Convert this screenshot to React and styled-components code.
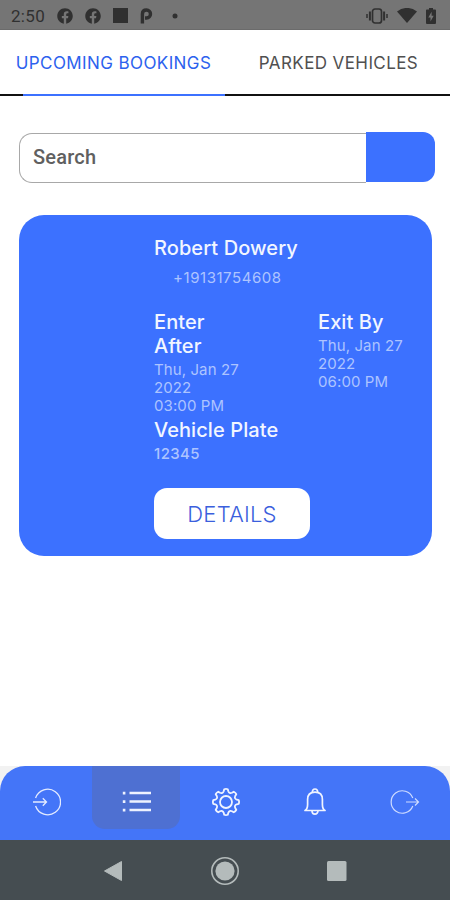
import styled, { createGlobalStyle } from "styled-components";
import { FaFacebook } from "react-icons/fa";

const BLUE = "#3c71ff";

const navItems = [
  { id: "enter", icon: <EnterIcon /> },
  { id: "list", icon: <ListIcon />, active: true },
  { id: "settings", icon: <GearIcon /> },
  { id: "alerts", icon: <BellIcon /> },
  { id: "exit", icon: <ExitIcon /> },
];

export default function App() {
  return (
    <Screen>
      <GlobalStyle />
      <StatusBar />

      <Tabs>
        <Tab $active>UPCOMING BOOKINGS</Tab>
        <Tab>PARKED VEHICLES</Tab>
      </Tabs>
      <TabTrack>
        <TabIndicator />
      </TabTrack>

      <Content>
        <SearchBar>
          <SearchInput placeholder="Search" aria-label="Search" />
          <SearchButton aria-label="Submit search" />
        </SearchBar>
        <BookingCard />
      </Content>

      <BottomArea>
        <BottomNav>
          {navItems.map(({ id, icon, active }) => (
            <NavItem key={id} $active={active} aria-label={id}>
              {icon}
            </NavItem>
          ))}
        </BottomNav>
      </BottomArea>

      <SystemBar>
        <svg width="20" height="22" viewBox="0 0 20 22">
          <path d="M18.5 1.500v19L1.500 11z" fill="#b4bbbb" stroke="#b4bbbb" strokeLinejoin="round" />
        </svg>
        <svg width="30" height="30" viewBox="0 0 30 30">
          <circle cx="15" cy="15" r="13.200" fill="none" stroke="#b4bbbb" strokeWidth="1.6" />
          <circle cx="15" cy="15" r="9.6" fill="#b4bbbb" />
        </svg>
        <svg width="20" height="20" viewBox="0 0 20 20">
          <rect width="19.5" height="20" rx="1.5" fill="#b4bbbb" />
        </svg>
      </SystemBar>
    </Screen>
  );
}

function StatusBar() {
  return (
    <StatusWrapper>
      <Clock>2:50</Clock>
      <StatusIcons>
        <FaFacebook size={16} />
        <FaFacebook size={16} />
        <svg width="15" height="15" viewBox="0 0 15 15">
          <rect width="15" height="15" fill="currentColor" />
        </svg>
        <svg width="13" height="16" viewBox="0 0 13 16">
          <path
            d="M2.4 15.500V6Q2.400 2 6.500 2A3.900 3.900 0 0 1 6.500 10H5"
            fill="none"
            stroke="currentColor"
            strokeWidth="3.4"
          />
        </svg>
        <svg width="6" height="6" viewBox="0 0 6 6">
          <circle cx="3" cy="3" r="2.5" fill="currentColor" />
        </svg>
      </StatusIcons>
      <SystemIcons>
        <svg width="22" height="16" viewBox="0 0 22 16" fill="none" stroke="currentColor">
          <rect x="6.5" y="1" width="9" height="14" rx="2.5" strokeWidth="1.7" />
          <path d="M3.9 3.5v9M18.1 3.5v9" strokeWidth="2" />
          <path d="M1 6v4M21 6v4" strokeWidth="1.5" />
        </svg>
        <svg width="20" height="15" viewBox="0 0 20 15">
          <path d="M0 3.4Q10-3.6 20 3.4L10 15z" fill="currentColor" />
        </svg>
        <svg width="10" height="16" viewBox="0 0 10 16">
          <path d="M3 0h4v1.6h2.2q.8 0 .8.8V15q0 1-1 1H1q-1 0-1-1V2.4q0-.8.8-.8H3z" fill="currentColor" />
          <path d="M5.6 3.8L2.3 9.4h2.2v4l3.2-5.7H5.6z" fill="#757575" />
        </svg>
      </SystemIcons>
    </StatusWrapper>
  );
}

function BookingCard() {
  return (
    <Card>
      <Heading>Robert Dowery</Heading>
      <Phone>+19131754608</Phone>
      <Times>
        <TimeBlock>
          <Heading>Enter After</Heading>
          <Detail>Thu, Jan 27 2022<br />03:00 PM</Detail>
        </TimeBlock>
        <TimeBlock>
          <Heading>Exit By</Heading>
          <Detail>Thu, Jan 27 2022<br />06:00 PM</Detail>
        </TimeBlock>
      </Times>
      <Heading>Vehicle Plate</Heading>
      <Plate>12345</Plate>
      <DetailsButton>DETAILS</DetailsButton>
    </Card>
  );
}

function EnterIcon() {
  return (
    <svg width="28" height="28" viewBox="0 0 28 28" fill="none" stroke="#e4ebff" strokeWidth="1.3">
      <path d="M2.6 10A12.8 12.8 0 1 1 2.6 18" />
      <path d="M0 14h13.5M9.8 10.3l3.7 3.7-3.7 3.7" />
    </svg>
  );
}

function ListIcon() {
  return (
    <svg width="29" height="22" viewBox="0 0 29 22" fill="#eef2ff">
      <path d="M7.5 .8h21.500v2.400H7.500zM7.500 9.300h21.500v2.400H7.500zM7.500 17.800h21.500v2.400H7.500z" />
      <path d="M.8 .8h2.600v2.600H.8zM.8 9.300h2.600v2.600H.8zM.8 17.800h2.600v2.600H.8z" />
    </svg>
  );
}

function GearIcon() {
  // one rounded tooth per 45deg, joined by concave notches
  const point = (radius, degrees) => {
    const angle = (degrees * Math.PI) / 180;
    return `${14 + radius * Math.cos(angle)} ${14 + radius * Math.sin(angle)}`;
  };
  const teeth = Array.from({ length: 8 }, (_, i) => {
    const mid = i * 45 - 90;
    return `${i ? "L" : "M"}${point(12.9, mid - 8)}Q${point(13.4, mid)} ${point(12.9, mid + 8)}L${point(11, mid + 12)}Q${point(8.8, mid + 22.5)} ${point(11, mid + 33)}`;
  }).join("");

  return (
    <svg width="28" height="28" viewBox="0 0 28 28" fill="none" stroke="#f0f4ff" strokeWidth="1.8">
      <path d={`${teeth}Z`} strokeLinejoin="round" />
      <circle cx="14" cy="14" r="6" />
    </svg>
  );
}

function BellIcon() {
  return (
    <svg width="22" height="28" viewBox="0 0 22 28" fill="none" stroke="#f0f4ff" strokeWidth="1.7">
      <path d="M1 22.5q2.600-1.400 2.600-6V11.500q0-7.300 7.400-7.300t7.400 7.300v5q0 4.600 2.600 6z" strokeLinejoin="round" />
      <path d="M8.5 4.300a2.600 2.600 0 1 1 5 0M8 22.700a3 3.400 0 0 0 6 0" />
    </svg>
  );
}

function ExitIcon() {
  return (
    <svg width="30" height="24" viewBox="0 0 30 24" fill="none" stroke="#cfdcff" strokeWidth="1.2">
      <path d="M22.8 8A11.200 11.200 0 1 0 22.800 16" />
      <path d="M16 12h12.500M25 8.500l3.500 3.500-3.500 3.500" />
    </svg>
  );
}

const GlobalStyle = createGlobalStyle`
  * {
    box-sizing: border-box;
  }

  body {
    margin: 0;
    background: #fff;
  }

  button, input {
    border: 0;
    padding: 0;
    background: none;
    font-family: inherit;
  }

  svg {
    display: block;
    flex: none;
  }
`;

const Screen = styled.div`
  display: flex;
  flex-direction: column;
  width: 450px;
  height: 900px;
  overflow: hidden;
  background: #fff;
  font-family: Inter, "Liberation Sans", sans-serif;
`;

const StatusWrapper = styled.header`
  display: flex;
  align-items: center;
  height: 30px;
  padding: 2px 14px 0 11px;
  background: #757575;
  border-bottom: 1px solid #6b6b6b;
  color: #303030;
`;

const Clock = styled.span`
  width: 46px;
  font: 400 17px Roboto, sans-serif;
  letter-spacing: .3px;
`;

const StatusIcons = styled.div`
  display: flex;
  align-items: center;
  gap: 12px;

  svg:last-child {
    margin-left: 7px;
  }
`;

const SystemIcons = styled.div`
  display: flex;
  align-items: center;
  gap: 9px;
  margin-left: auto;
`;

const Tabs = styled.nav`
  display: grid;
  grid-template-columns: 227px 223px;
  height: 64px;
`;

const Tab = styled.button`
  padding-top: 2px;
  font-size: 17px;
  letter-spacing: .4px;
  white-space: nowrap;
  color: ${(props) => (props.$active ? "#2c62ee" : "#505050")};
`;

const TabTrack = styled.div`
  height: 2px;
  padding-left: 23px;
  background: #111;
`;

const TabIndicator = styled.div`
  width: 202px;
  height: 2px;
  background: ${BLUE};
`;

const Content = styled.main`
  flex: 1;
  padding: 36px 15px 0 19px;
`;

const SearchBar = styled.form`
  display: flex;
  height: 51px;
`;

const SearchInput = styled.input`
  flex: 1;
  min-width: 0;
  margin-top: 1px;
  padding: 0 0 3px 13px;
  border: 1px solid #a8a8a8;
  border-right: 0;
  border-radius: 13px 0 0 13px;
  font: 500 20px Roboto, sans-serif;
  letter-spacing: .2px;

  &::placeholder {
    color: #606060;
    opacity: 1;
  }
`;

const SearchButton = styled.button`
  width: 69px;
  height: 50px;
  border-radius: 0 12px 12px 0;
  background: ${BLUE};
`;

const Card = styled.section`
  display: flex;
  flex-direction: column;
  align-items: flex-start;
  width: 412.5px;
  height: 341.5px;
  margin-top: 31.5px;
  padding: 21.5px 0 0 135px;
  border-radius: 25px;
  background: ${BLUE};
`;

const Heading = styled.h2`
  margin: 0;
  color: #f2f6ff;
  font-size: 20px;
  font-weight: 500;
  line-height: 24px;
  letter-spacing: .08px;
`;

const Detail = styled.p`
  margin: 3px 0;
  color: #adc4ff;
  font-size: 15px;
  line-height: 18px;
  letter-spacing: .1px;
`;

const Phone = styled(Detail)`
  margin: 9px 0 0 19px;
  letter-spacing: .55px;
`;

const Plate = styled(Detail)`
  font-weight: 500;
  letter-spacing: .4px;
`;

const Times = styled.div`
  display: grid;
  grid-template-columns: 92px 92px;
  column-gap: 72px;
  margin-top: 22.5px;
`;

const TimeBlock = styled.div`
  ${Heading} {
    max-width: 80px;
  }
`;

const DetailsButton = styled.button`
  width: 156px;
  height: 51px;
  margin-top: 22px;
  padding-top: 2px;
  border-radius: 13px;
  background: #fff;
  color: #3b5fdd;
  font-size: 22px;
  font-weight: 300;
  letter-spacing: .2px;
`;

const BottomArea = styled.div`
  background: #f2f2f2;
`;

const BottomNav = styled.nav`
  display: grid;
  grid-template-columns: repeat(5, 88px);
  justify-content: space-evenly;
  height: 74.5px;
  padding-left: 1px;
  border-radius: 25px 25px 0 0;
  background: #4475f8;
`;

const NavItem = styled.button`
  display: flex;
  align-items: center;
  justify-content: center;
  height: 63px;
  padding-top: 9px;
  border-radius: 0 0 13px 13px;
  background: ${(props) => (props.$active ? "#4e70d2" : "none")};
`;

const SystemBar = styled.footer`
  display: flex;
  align-items: center;
  justify-content: center;
  gap: 87px;
  height: 60px;
  padding: 1px 1px 0 0;
  background: #454d51;
`;
